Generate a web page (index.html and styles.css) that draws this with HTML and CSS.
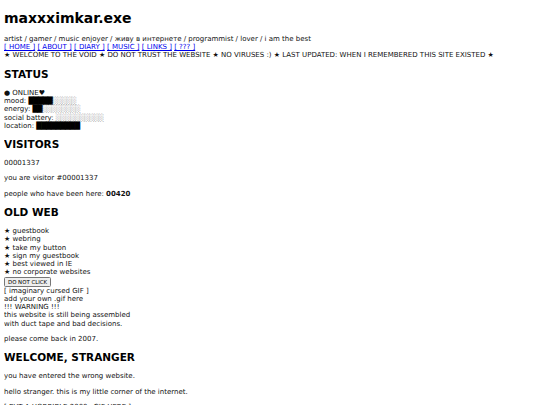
FILE: index.html
```html
<!DOCTYPE html>
<html>
<head>
<meta charset="utf-8">
<title>maxxximkar.exe</title>
<link rel="stylesheet" href="styles.css">
</head>
<body>
<h1 class="title">maxxximkar.exe</h1>
<div class="tagline">artist / gamer / music enjoyer / живу в интернете / programmist / lover / i am the best</div>
<nav class="nav"><a href="#">[ HOME ]</a> <a href="#">[ ABOUT ]</a> <a href="#">[ DIARY ]</a> <a href="#">[ MUSIC ]</a> <a href="#">[ LINKS ]</a> <a href="#">[ ??? ]</a></nav>
<div class="ticker">★ WELCOME TO THE VOID ★ DO NOT TRUST THE WEBSITE ★ NO VIRUSES :) ★ LAST UPDATED: WHEN I REMEMBERED THIS SITE EXISTED ★</div>

<h2 class="section">STATUS</h2>
<div class="status">
  <div>● ONLINE♥</div>
  <div>mood: <span class="bar"><span class="full">█████</span><span class="empty">░░░░░</span></span></div>
  <div>energy: <span class="bar"><span class="full">██</span><span class="empty">░░░░░░░░</span></span></div>
  <div>social battery: <span class="bar"><span class="empty">░░░░░░░░░░</span></span></div>
  <div>location: <span class="bar"><span class="full">█████████</span></span></div>
</div>

<h2 class="section">VISITORS</h2>
<p class="para">00001337</p>
<p class="para">you are visitor #00001337</p>
<p class="para">people who have been here: <b>00420</b></p>

<h2 class="section">OLD WEB</h2>
<ul class="stars">
  <li>★ guestbook</li>
  <li>★ webring</li>
  <li>★ take my button</li>
  <li>★ sign my guestbook</li>
  <li>★ best viewed in IE</li>
  <li>★ no corporate websites</li>
</ul>
<button class="btn" type="button">DO NOT CLICK</button>
<div class="lines">
  <div>[ imaginary cursed GIF ]</div>
  <div>add your own .gif here</div>
  <div>!!! WARNING !!!</div>
  <div>this website is still being assembled<br>with duct tape and bad decisions.</div>
</div>
<p class="para">please come back in 2007.</p>

<h2 class="section">WELCOME, STRANGER</h2>
<p class="para">you have entered the wrong website.</p>
<p class="para">hello stranger. this is my little corner of the internet.</p>
<p class="para">[ PUT A HORRIBLE 2000s GIF HERE ]</p>
</body>
</html>
```
FILE: styles.css
```css
html {
  background: #ffffff;
}
body {
  margin: 4px;
  font-family: Verdana, "DejaVu Sans", sans-serif;
  font-size: 7px;
  line-height: 8.25px;
  color: #111111;
  background: #ffffff;
}
.title {
  font-size: 14px;
  line-height: 17px;
  margin: 5.5px 0 8.4px;
  color: #000000;
}
.section {
  font-size: 10.5px;
  line-height: 12.8px;
  margin: 8.2px 0;
  color: #000000;
}
.nav a {
  color: #0000ee;
}
.bar {
  letter-spacing: -0.6px;
}
.status .full {
  color: #000000;
}
.status .empty {
  color: #8a8a8a;
}
.para {
  margin: 7px 0;
}
.stars {
  list-style: none;
  margin: 0;
  padding: 0;
}
.btn {
  display: block;
  font-family: Verdana, "DejaVu Sans", sans-serif;
  font-size: 5.4px;
  line-height: 6px;
  color: #000000;
  padding: 1px 3px;
  background: #efefef;
  border: 1px solid #767676;
  border-radius: 1.5px;
}
```
